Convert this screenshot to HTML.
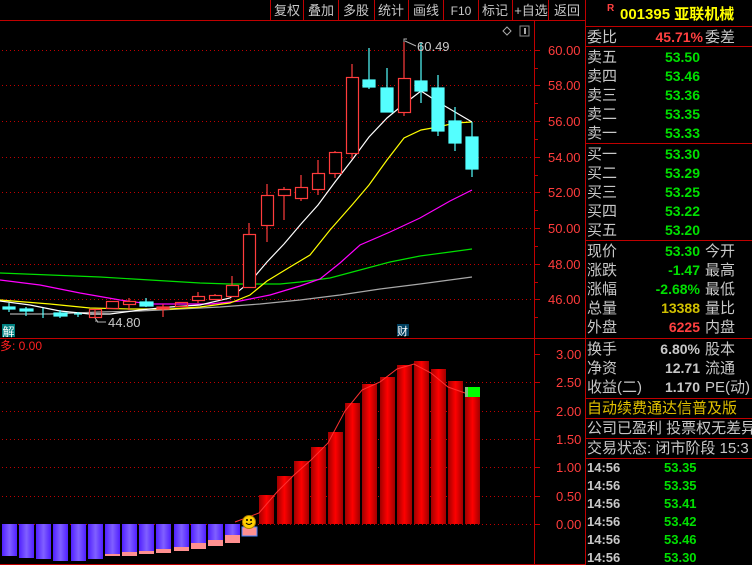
<!DOCTYPE html>
<html><head><meta charset="utf-8"><style>
html,body{margin:0;padding:0;background:#000;width:752px;height:565px;overflow:hidden}
svg{display:block}
text{font-family:"Liberation Sans","Noto Sans CJK SC",sans-serif}
.cn{font-size:15px;fill:#c8c8c8}
.num{font-size:14px;font-weight:bold;text-anchor:end}
.tb{font-size:13px;fill:#c8c8c8;text-anchor:middle}
.ax{font-size:13px;fill:#ff3c3c}
</style></head><body>
<svg width="752" height="565" viewBox="0 0 752 565" xmlns="http://www.w3.org/2000/svg">
<rect width="752" height="565" fill="#000"/>
<!-- toolbar -->
<g stroke="#c00000" stroke-width="1">
<line x1="0" y1="20.5" x2="585" y2="20.5"/>
<line x1="270.5" y1="0" x2="270.5" y2="20"/><line x1="303.5" y1="0" x2="303.5" y2="20"/><line x1="338.5" y1="0" x2="338.5" y2="20"/><line x1="374.5" y1="0" x2="374.5" y2="20"/><line x1="408.5" y1="0" x2="408.5" y2="20"/><line x1="443.5" y1="0" x2="443.5" y2="20"/><line x1="478.5" y1="0" x2="478.5" y2="20"/><line x1="512.5" y1="0" x2="512.5" y2="20"/><line x1="548.5" y1="0" x2="548.5" y2="20"/>
<line x1="585.5" y1="0" x2="585.5" y2="565"/>
<line x1="534.5" y1="20" x2="534.5" y2="565"/>
<line x1="0" y1="338.5" x2="585" y2="338.5"/>
<line x1="0" y1="564.5" x2="585" y2="564.5"/>
</g>
<g class="tb">
<text x="287" y="15">复权</text><text x="321" y="15">叠加</text><text x="356" y="15">多股</text><text x="391" y="15">统计</text><text x="426" y="15">画线</text><text x="461" y="15" style="font-size:12px">F10</text><text x="495" y="15">标记</text><text x="531" y="15">+自选</text><text x="567" y="15">返回</text>
</g>
<!-- icons top right chart -->
<path d="M507 27 L511 31 L507 35 L503 31 Z" fill="none" stroke="#aaa"/>
<rect x="520" y="26" width="9" height="10" fill="none" stroke="#888"/><rect x="524" y="28" width="2" height="6" fill="#aaa"/>
<!-- grid main -->
<g stroke="#c00000" stroke-width="1" stroke-dasharray="1 3">
<line x1="2" y1="50.5" x2="534" y2="50.5"/><line x1="2" y1="85.5" x2="534" y2="85.5"/><line x1="2" y1="121.5" x2="534" y2="121.5"/><line x1="2" y1="157.5" x2="534" y2="157.5"/><line x1="2" y1="192.5" x2="534" y2="192.5"/><line x1="2" y1="228.5" x2="534" y2="228.5"/><line x1="2" y1="264.5" x2="534" y2="264.5"/><line x1="2" y1="299.5" x2="534" y2="299.5"/>
<line x1="2" y1="382.5" x2="534" y2="382.5"/><line x1="2" y1="411.5" x2="534" y2="411.5"/><line x1="2" y1="439.5" x2="534" y2="439.5"/><line x1="2" y1="467.5" x2="534" y2="467.5"/><line x1="2" y1="496.5" x2="534" y2="496.5"/><line x1="2" y1="524.5" x2="534" y2="524.5"/>
</g>
<!-- axis ticks -->
<g stroke="#c00000">
<line x1="535" y1="50.5" x2="540" y2="50.5"/><line x1="535" y1="85.5" x2="540" y2="85.5"/><line x1="535" y1="121.5" x2="540" y2="121.5"/><line x1="535" y1="157.5" x2="540" y2="157.5"/><line x1="535" y1="192.5" x2="540" y2="192.5"/><line x1="535" y1="228.5" x2="540" y2="228.5"/><line x1="535" y1="264.5" x2="540" y2="264.5"/><line x1="535" y1="299.5" x2="540" y2="299.5"/>
<line x1="535" y1="68.5" x2="538" y2="68.5"/><line x1="535" y1="103.5" x2="538" y2="103.5"/><line x1="535" y1="139.5" x2="538" y2="139.5"/><line x1="535" y1="175.5" x2="538" y2="175.5"/><line x1="535" y1="210.5" x2="538" y2="210.5"/><line x1="535" y1="246.5" x2="538" y2="246.5"/><line x1="535" y1="282.5" x2="538" y2="282.5"/><line x1="535" y1="317.5" x2="538" y2="317.5"/>
<line x1="535" y1="354.5" x2="540" y2="354.5"/><line x1="535" y1="382.5" x2="540" y2="382.5"/><line x1="535" y1="411.5" x2="540" y2="411.5"/><line x1="535" y1="439.5" x2="540" y2="439.5"/><line x1="535" y1="467.5" x2="540" y2="467.5"/><line x1="535" y1="496.5" x2="540" y2="496.5"/><line x1="535" y1="524.5" x2="540" y2="524.5"/>
</g>
<g class="ax">
<text x="548" y="55">60.00</text><text x="548" y="90">58.00</text><text x="548" y="126">56.00</text><text x="548" y="162">54.00</text><text x="548" y="197">52.00</text><text x="548" y="233">50.00</text><text x="548" y="269">48.00</text><text x="548" y="304">46.00</text>
<text x="556" y="359">3.00</text><text x="556" y="387">2.50</text><text x="556" y="416">2.00</text><text x="556" y="444">1.50</text><text x="556" y="472">1.00</text><text x="556" y="501">0.50</text><text x="556" y="529">0.00</text>
</g>
<!-- MAs -->
<g fill="none" stroke-width="1.2">
<polyline stroke="#a8a8a8" points="10,314 50,314 100,312 140,311 180,309 220,307 260,304 300,300 340,295 380,289 420,284 472,277"/>
<polyline stroke="#00e000" points="0,273 50,275 100,277 150,280 200,283 230,284 280,284 300,282 330,278 360,270 390,262 420,256 450,252 472,249"/>
<polyline stroke="#ff00ff" points="0,280 40,285 80,293 120,300 150,304 180,304 210,304 240,301 270,295 300,286 320,279 340,263 360,245 390,232 420,218 450,201 472,190"/>
<polyline stroke="#ffff00" points="0,300 50,304 90,308 130,309 170,309 200,307 230,303 250,295 267,281 290,267 310,255 330,230 352,205 369,185 387,160 404,138 421,130 438,127 455,123 472,122"/>
<polyline stroke="#ffffff" points="0,301 30,305 60,311 90,314 110,314 140,310 170,307 200,305 230,298 250,282 267,262 284,244 301,224 318,205 335,182 352,160 369,137 387,118 404,104 421,91 438,102 455,112 472,122"/>
</g>
<!-- candles -->
<g stroke="#ff3c3c" fill="none" stroke-width="1.2">
<line x1="95" y1="309" x2="95" y2="318"/><rect x="89.5" y="309.5" width="12" height="8"/>
<rect x="106.5" y="301.5" width="12" height="7"/>
<line x1="129" y1="298" x2="129" y2="310"/><rect x="123.5" y="301.5" width="12" height="3" fill="#000"/>
<line x1="163" y1="304" x2="163" y2="317"/><rect x="157" y="307" width="12" height="2" fill="#ff3c3c"/>
<rect x="175.5" y="302.5" width="12" height="4"/>
<line x1="198" y1="292" x2="198" y2="303"/><rect x="192.5" y="296.5" width="12" height="4" fill="#000"/>
<line x1="215" y1="294" x2="215" y2="296"/><rect x="209.5" y="295.5" width="12" height="4"/>
<line x1="232" y1="276" x2="232" y2="296"/><rect x="226.5" y="285.5" width="12" height="11" fill="#000"/>
<line x1="249" y1="223" x2="249" y2="287"/><rect x="243.5" y="234.5" width="12" height="53" fill="#000"/>
<line x1="267" y1="184" x2="267" y2="242"/><rect x="261.5" y="195.5" width="12" height="30" fill="#000"/>
<line x1="284" y1="187" x2="284" y2="220"/><rect x="278.5" y="189.5" width="12" height="6" fill="#000"/>
<line x1="301" y1="175" x2="301" y2="201"/><rect x="295.5" y="187.5" width="12" height="11" fill="#000"/>
<line x1="318" y1="160" x2="318" y2="195"/><rect x="312.5" y="173.5" width="12" height="16" fill="#000"/>
<line x1="335" y1="151" x2="335" y2="178"/><rect x="329.5" y="152.5" width="12" height="21" fill="#000"/>
<line x1="352" y1="64" x2="352" y2="159"/><rect x="346.5" y="77.5" width="12" height="76" fill="#000"/>
<line x1="404" y1="42" x2="404" y2="116"/><rect x="398.5" y="78.5" width="12" height="34" fill="#000"/>
</g>
<g stroke="#54ffff" fill="#54ffff" stroke-width="1.2">
<line x1="9" y1="303" x2="9" y2="312"/><rect x="3" y="307" width="12" height="2"/>
<line x1="26" y1="307" x2="26" y2="316"/><rect x="20" y="309" width="13" height="2"/>
<line x1="43" y1="308" x2="43" y2="318"/>
<line x1="60" y1="310" x2="60" y2="318"/><rect x="54" y="313" width="13" height="3"/>
<line x1="78" y1="312" x2="78" y2="317"/><line x1="74" y1="314" x2="82" y2="314"/>
<line x1="146" y1="298" x2="146" y2="307"/><rect x="140" y="302" width="13" height="4"/>
<line x1="369" y1="48" x2="369" y2="89"/><rect x="363" y="80" width="12" height="7"/>
<line x1="387" y1="68" x2="387" y2="112"/><rect x="381" y="88" width="12" height="24"/>
<line x1="421" y1="43" x2="421" y2="103"/><rect x="415" y="81" width="12" height="10"/>
<line x1="438" y1="75" x2="438" y2="136"/><rect x="432" y="88" width="12" height="43"/>
<line x1="455" y1="107" x2="455" y2="151"/><rect x="449" y="121" width="12" height="22"/>
<line x1="472" y1="122" x2="472" y2="177"/><rect x="466" y="137" width="12" height="32"/>
</g>
<!-- price labels -->
<path d="M404 42 L404 39 L407 39 M405 41 L416 46" stroke="#b0b0b0" fill="none"/>
<text x="417" y="51" style="font-size:13px;fill:#c8c8c8">60.49</text>
<path d="M95 318 L98 322 M96 319 L96 322 M97 322 L106 322" stroke="#b0b0b0" fill="none"/>
<text x="108" y="327" style="font-size:13px;fill:#c8c8c8">44.80</text>
<rect x="2" y="324" width="13" height="13" fill="#008080"/><text x="2.5" y="336" style="font-size:12px;fill:#fff">解</text>
<rect x="397" y="324" width="12" height="12" fill="#004060"/><text x="397" y="335" style="font-size:11px;fill:#fff">财</text>
<!-- sub chart -->
<text x="0" y="350" style="font-size:12px;fill:#ff2020">多: 0.00</text>
<defs>
<linearGradient id="rg" x1="0" x2="1"><stop offset="0" stop-color="#a00000"/><stop offset="0.5" stop-color="#ff0000"/><stop offset="1" stop-color="#a00000"/></linearGradient>
<linearGradient id="bg" x1="0" x2="1"><stop offset="0" stop-color="#5020ff"/><stop offset="0.5" stop-color="#8060ff"/><stop offset="1" stop-color="#5020ff"/></linearGradient>
</defs>
<g fill="url(#rg)">
<rect x="259" y="495" width="15" height="29"/><rect x="277" y="476" width="15" height="48"/><rect x="294" y="461" width="15" height="63"/><rect x="311" y="447" width="15" height="77"/><rect x="328" y="432" width="15" height="92"/><rect x="345" y="403" width="15" height="121"/><rect x="362" y="384" width="15" height="140"/><rect x="380" y="377" width="15" height="147"/><rect x="397" y="365" width="15" height="159"/><rect x="414" y="361" width="15" height="163"/><rect x="431" y="369" width="15" height="155"/><rect x="448" y="381" width="15" height="143"/><rect x="465" y="387" width="15" height="137"/>
</g>
<rect x="465" y="387" width="15" height="10" fill="#00ff00"/><rect x="465" y="387" width="3" height="10" fill="#80c080"/>
<polyline fill="none" stroke="#ff3030" stroke-width="1" points="235,522 259,513 277,492 294,475 311,460 328,443 345,411 362,390 380,382 397,369 414,364 431,373 448,387 465,393"/>
<g fill="url(#bg)">
<rect x="2" y="524" width="15" height="32"/><rect x="19" y="524" width="15" height="34"/><rect x="36" y="524" width="15" height="35"/><rect x="53" y="524" width="15" height="37"/><rect x="71" y="524" width="15" height="37"/><rect x="88" y="524" width="15" height="35"/><rect x="105" y="524" width="15" height="32"/><rect x="122" y="524" width="15" height="28"/><rect x="139" y="524" width="15" height="27"/><rect x="156" y="524" width="15" height="25"/><rect x="174" y="524" width="15" height="23"/><rect x="191" y="524" width="15" height="19"/><rect x="208" y="524" width="15" height="16"/><rect x="225" y="524" width="15" height="11"/>
</g>
<g fill="#ff9090">
<rect x="105" y="554" width="15" height="2"/><rect x="122" y="552" width="15" height="4"/><rect x="139" y="551" width="15" height="3"/><rect x="156" y="549" width="15" height="4"/><rect x="174" y="547" width="15" height="4"/><rect x="191" y="543" width="15" height="6"/><rect x="208" y="540" width="15" height="6"/><rect x="225" y="535" width="15" height="8"/>
<rect x="242" y="527" width="15" height="9" stroke="#4080ff"/>
</g>
<circle cx="249" cy="522" r="6.5" fill="#ffd000" stroke="#b08000"/>
<circle cx="247" cy="520" r="1" fill="#000"/><circle cx="251" cy="520" r="1" fill="#000"/>
<path d="M246 523 Q249 526 252 523" stroke="#000" fill="none"/>
<!-- right panel -->
<g stroke="#c00000">
<line x1="586" y1="26.5" x2="752" y2="26.5"/><line x1="586" y1="46.5" x2="752" y2="46.5"/><line x1="586" y1="143.5" x2="752" y2="143.5"/><line x1="586" y1="240.5" x2="752" y2="240.5"/><line x1="586" y1="338.5" x2="752" y2="338.5"/><line x1="586" y1="398.5" x2="752" y2="398.5"/><line x1="586" y1="418.5" x2="752" y2="418.5"/><line x1="586" y1="438.5" x2="752" y2="438.5"/><line x1="586" y1="458.5" x2="752" y2="458.5"/>
</g>
<text x="607" y="11" style="font-size:10px;fill:#ff4040;font-weight:bold">R</text>
<text x="620" y="19" style="font-size:15px;fill:#ffff00;font-weight:bold">001395 亚联机械</text>
<g class="cn">
<text x="587" y="42">委比</text><text x="705" y="42">委差</text>
<text x="587" y="62">卖五</text><text x="587" y="81">卖四</text><text x="587" y="100">卖三</text><text x="587" y="119">卖二</text><text x="587" y="138">卖一</text>
<text x="587" y="159">买一</text><text x="587" y="178">买二</text><text x="587" y="197">买三</text><text x="587" y="216">买四</text><text x="587" y="235">买五</text>
<text x="587" y="256">现价</text><text x="705" y="256">今开</text>
<text x="587" y="275">涨跌</text><text x="705" y="275">最高</text>
<text x="587" y="294">涨幅</text><text x="705" y="294">最低</text>
<text x="587" y="313">总量</text><text x="705" y="313">量比</text>
<text x="587" y="332">外盘</text><text x="705" y="332">内盘</text>
<text x="587" y="354">换手</text><text x="705" y="354">股本</text>
<text x="587" y="373">净资</text><text x="705" y="373">流通</text>
<text x="587" y="392">收益(二)</text><text x="705" y="392">PE(动)</text>
<text x="587" y="433">公司已盈利 投票权无差异</text>
<text x="587" y="453">交易状态: 闭市阶段 15:3</text>
</g>
<text x="587" y="413" style="font-size:15px;fill:#e0c000">自动续费通达信普及版</text>
<g class="num">
<text x="703" y="42" fill="#ff4040">45.71%</text>
<g fill="#00e000"><text x="700" y="62">53.50</text><text x="700" y="81">53.46</text><text x="700" y="100">53.36</text><text x="700" y="119">53.35</text><text x="700" y="138">53.33</text>
<text x="700" y="159">53.30</text><text x="700" y="178">53.29</text><text x="700" y="197">53.25</text><text x="700" y="216">53.22</text><text x="700" y="235">53.20</text>
<text x="700" y="256">53.30</text><text x="700" y="275">-1.47</text><text x="700" y="294">-2.68%</text></g>
<text x="700" y="313" fill="#d0c000">13388</text><text x="700" y="332" fill="#ff4040">6225</text>
<g fill="#c8c8c8"><text x="700" y="354">6.80%</text><text x="700" y="373">12.71</text><text x="700" y="392">1.170</text></g>
</g>
<g style="font-size:13px;font-weight:bold">
<text x="587" y="472" fill="#c8c8c8">14:56</text><text x="664" y="472" fill="#00e000">53.35</text>
<text x="587" y="490" fill="#c8c8c8">14:56</text><text x="664" y="490" fill="#00e000">53.35</text>
<text x="587" y="508" fill="#c8c8c8">14:56</text><text x="664" y="508" fill="#00e000">53.41</text>
<text x="587" y="526" fill="#c8c8c8">14:56</text><text x="664" y="526" fill="#00e000">53.42</text>
<text x="587" y="544" fill="#c8c8c8">14:56</text><text x="664" y="544" fill="#00e000">53.46</text>
<text x="587" y="562" fill="#c8c8c8">14:56</text><text x="664" y="562" fill="#00e000">53.30</text>
</g>
</svg>
</body></html>
